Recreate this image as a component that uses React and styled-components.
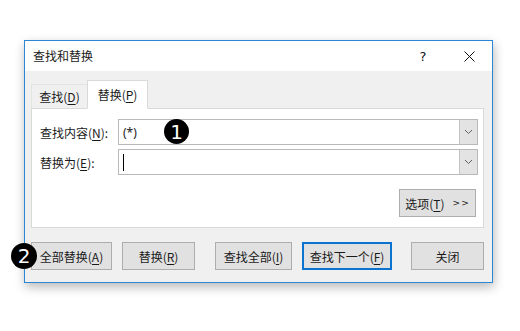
import React from "react";
import styled, { createGlobalStyle } from "styled-components";

const GlobalStyle = createGlobalStyle`
  html, body {
    margin: 0;
    padding: 0;
    background: #ffffff;
  }
  body {
    font-family: "Microsoft YaHei", "Noto Sans CJK SC", "Noto Sans", sans-serif;
    font-size: 12px;
    color: #1a1a1a;
  }
`;

const Page = styled.div`
  width: 520px;
  height: 331px;
  padding: 40px 0 0 24px;
  box-sizing: border-box;
`;

const Dialog = styled.div`
  position: relative;
  width: 469px;
  height: 243px;
  box-sizing: border-box;
  border: 1px solid #2b86d4;
  background: #f0f0f0;
  box-shadow: 1px 4px 10px rgba(0, 0, 0, 0.28);
  display: flex;
  flex-direction: column;
`;

const TitleBar = styled.div`
  height: 30px;
  background: #ffffff;
  display: flex;
  align-items: center;
  padding-left: 8px;
  flex-shrink: 0;
`;

const Title = styled.div`
  flex: 1;
  line-height: 30px;
`;

const TitleButton = styled.div`
  width: 46px;
  height: 30px;
  display: flex;
  align-items: center;
  justify-content: center;
  font-family: "Segoe UI", "DejaVu Sans", sans-serif;
  font-size: 13px;
  color: #111;
`;

const Body = styled.div`
  flex: 1;
  padding: 0 8px 0 6px;
  display: flex;
  flex-direction: column;
`;

const TabStrip = styled.div`
  display: flex;
  align-items: flex-end;
  height: 38px;
  margin-bottom: -1px;
  position: relative;
  z-index: 1;
`;

const Tab = styled.div`
  width: ${(p) => (p.$active ? "61px" : "57px")};
  height: ${(p) => (p.$active ? "29px" : "25px")};
  display: flex;
  align-items: center;
  justify-content: center;
  box-sizing: border-box;
  white-space: nowrap;
  background: ${(p) => (p.$active ? "#ffffff" : "#f0f0f0")};
  border: 1px solid ${(p) => (p.$active ? "#d9d9d9" : "#e3e3e3")};
  border-bottom: ${(p) => (p.$active ? "1px solid #ffffff" : "1px solid #d9d9d9")};
  margin-left: ${(p) => (p.$active ? "-1px" : "0")};
`;

const U = styled.span`
  text-decoration: underline;
  text-underline-offset: 2px;
`;

const Panel = styled.div`
  height: 120px;
  box-sizing: border-box;
  background: #ffffff;
  border: 1px solid #d9d9d9;
  padding: 10px 5px 0 8px;
  display: flex;
  flex-direction: column;
`;

const FieldRow = styled.div`
  display: flex;
  align-items: center;
  height: 26px;
  margin-bottom: 4px;
`;

const Label = styled.div`
  width: 78px;
  flex-shrink: 0;
`;

const Combo = styled.div`
  position: relative;
  flex: 1;
  height: 26px;
  box-sizing: border-box;
  border: 1px solid #b9b9b9;
  display: flex;
  align-items: stretch;
  background: #ffffff;
`;

const ComboText = styled.div`
  flex: 1;
  display: flex;
  align-items: center;
  padding-left: 4px;
  font-family: "Segoe UI", "Noto Sans", "DejaVu Sans", sans-serif;
  font-size: 12px;
`;

const Caret = styled.div`
  width: 1px;
  height: 17px;
  background: #000;
`;

const DropButton = styled.div`
  width: 17px;
  background: #e3e3e3;
  border-left: 1px solid #c4c4c4;
  display: flex;
  align-items: center;
  justify-content: center;
`;

const OptionsRow = styled.div`
  display: flex;
  justify-content: flex-end;
  margin-top: 10px;
  padding-right: 2px;
`;

const Button = styled.div`
  width: ${(p) => p.$w}px;
  margin-left: ${(p) => p.$ml || 0}px;
  height: 28px;
  box-sizing: border-box;
  background: #e1e1e1;
  border: ${(p) => (p.$default ? "2px solid #0a74d0" : "1px solid #adadad")};
  display: flex;
  align-items: center;
  justify-content: center;
  white-space: nowrap;
  flex-shrink: 0;
`;

const Arrows = styled.span`
  margin-left: 8px;
  font-family: "DejaVu Sans", sans-serif;
  font-size: 9px;
  letter-spacing: 1px;
`;

const ButtonRow = styled.div`
  display: flex;
  margin-top: 14px;
  position: relative;
`;

const Badge = styled.div`
  position: absolute;
  width: ${(p) => p.$size}px;
  height: ${(p) => p.$size}px;
  border-radius: 50%;
  background: #000;
  color: #fff;
  display: flex;
  align-items: center;
  justify-content: center;
  font-family: "DejaVu Sans", sans-serif;
  font-size: 20px;
  line-height: 1;
  left: ${(p) => p.$x}px;
  top: ${(p) => p.$y}px;
  z-index: 5;
`;

const Chevron = () => (
  <svg width="9" height="6" viewBox="0 0 9 6">
    <path d="M1 1 L4.5 4.5 L8 1" fill="none" stroke="#606060" strokeWidth="1" />
  </svg>
);

const CloseIcon = () => (
  <svg width="11" height="11" viewBox="0 0 11 11">
    <path d="M0.5 0.5 L10.5 10.5 M10.5 0.5 L0.5 10.5" stroke="#111" strokeWidth="1" />
  </svg>
);

export default function App() {
  return (
    <Page>
      <GlobalStyle />
      <Dialog>
        <TitleBar>
          <Title>查找和替换</Title>
          <TitleButton>?</TitleButton>
          <TitleButton>
            <CloseIcon />
          </TitleButton>
        </TitleBar>
        <Body>
          <TabStrip>
            <Tab>
              查找(<U>D</U>)
            </Tab>
            <Tab $active>
              替换(<U>P</U>)
            </Tab>
          </TabStrip>
          <Panel>
            <FieldRow>
              <Label>
                查找内容(<U>N</U>):
              </Label>
              <Combo>
                <ComboText>(*)</ComboText>
                <DropButton>
                  <Chevron />
                </DropButton>
                <Badge $size={25} $x={45} $y={-1}>1</Badge>
              </Combo>
            </FieldRow>
            <FieldRow>
              <Label>
                替换为(<U>E</U>):
              </Label>
              <Combo>
                <ComboText>
                  <Caret />
                </ComboText>
                <DropButton>
                  <Chevron />
                </DropButton>
              </Combo>
            </FieldRow>
            <OptionsRow>
              <Button $w={77}>
                选项(<U>T</U>)<Arrows>&gt;&gt;</Arrows>
              </Button>
            </OptionsRow>
          </Panel>
          <ButtonRow>
            <Badge $size={26} $x={-20} $y={1}>2</Badge>
            <Button $w={81}>
              全部替换(<U>A</U>)
            </Button>
            <Button $w={73} $ml={10}>
              替换(<U>R</U>)
            </Button>
            <Button $w={77} $ml={20}>
              查找全部(<U>I</U>)
            </Button>
            <Button $w={90} $ml={10} $default>
              查找下一个(<U>F</U>)
            </Button>
            <Button $w={73} $ml={19}>
              关闭
            </Button>
          </ButtonRow>
        </Body>
      </Dialog>
    </Page>
  );
}
